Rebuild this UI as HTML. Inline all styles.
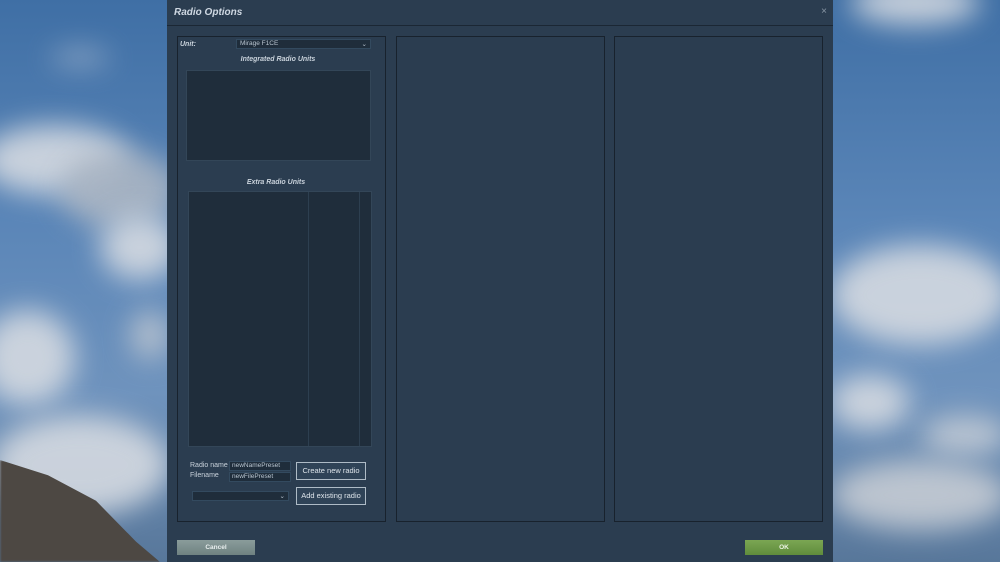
<!DOCTYPE html>
<html><head><style>
*{margin:0;padding:0;box-sizing:border-box}
body{width:1000px;height:562px;overflow:hidden;position:relative;font-family:"Liberation Sans","DejaVu Sans",sans-serif;background:linear-gradient(#3f6fa5,#5b86b8 40%,#6f93bd 70%,#58779a);}
.c{position:absolute;border-radius:50%;background:#d5dae1;filter:blur(14px);opacity:.9}
.dlg{position:absolute;left:167px;top:0;width:666px;height:562px;background:#2b3d50}
.ab{position:absolute}
.title{left:7px;top:7px;color:#cfd8e2;font-style:italic;font-weight:bold;font-size:10px}
.hline{left:0;top:25px;width:666px;height:1px;background:#1b2734}
.pnl{border:1px solid #18222d;background:#2b3d50}
.lbl{color:#c9d2db;font-size:7px;font-style:italic;font-weight:bold}
.inp{background:#1f2d3b;border:1px solid #334a5f;color:#b8c4cf;font-size:6.5px;padding:1px 2px}
.btn{border:1px solid #aebbc6;color:#dde4ea;font-size:7.5px;text-align:center;background:#2f4357}
</style></head><body>
<div class="c" style="left:-20px;top:125px;width:150px;height:70px"></div>
<div class="c" style="left:60px;top:150px;width:120px;height:80px;background:#aab5c3"></div>
<div class="c" style="left:100px;top:215px;width:80px;height:65px"></div>
<div class="c" style="left:-20px;top:310px;width:95px;height:95px"></div>
<div class="c" style="left:50px;top:50px;width:60px;height:15px;background:#9fb3cc"></div>
<div class="c" style="left:-10px;top:415px;width:180px;height:100px"></div>
<div class="c" style="left:130px;top:310px;width:40px;height:50px;background:#b9c3cf"></div>
<div style="position:absolute;left:0;top:460px;width:160px;height:102px;background:#4d4843;clip-path:polygon(0 0,30% 15%,60% 40%,85% 80%,100% 100%,0 100%);filter:blur(1px)"></div>
<div class="c" style="left:850px;top:-20px;width:130px;height:45px"></div>
<div class="c" style="left:830px;top:245px;width:180px;height:100px"></div>
<div class="c" style="left:830px;top:375px;width:80px;height:55px"></div>
<div class="c" style="left:920px;top:415px;width:90px;height:40px;background:#c4ccd6"></div>
<div class="c" style="left:830px;top:460px;width:180px;height:70px;background:#c6ccd4"></div>
<div class="dlg">
<div class="ab title">Radio Options</div>
<div class="ab" style="right:6px;top:6px;color:#8a98a6;font-size:10px">×</div>
<div class="ab hline"></div>
<div class="ab pnl" style="left:10px;top:36px;width:209px;height:486px">
 <div class="ab lbl" style="left:2px;top:4px">Unit:</div>
 <div class="ab inp" style="left:58px;top:2px;width:135px;height:10px;font-size:6.5px;padding:0 3px">Mirage F1CE<span style="float:right">⌄</span></div>
 <div class="ab lbl" style="left:0;width:200px;text-align:center;top:19px">Integrated Radio Units</div>
 <div class="ab" style="left:8px;top:33px;width:185px;height:91px;background:#1f2d3b;border:1px solid #334658"></div>
 <div class="ab lbl" style="left:0;width:196px;text-align:center;top:142px">Extra Radio Units</div>
 <div class="ab" style="left:10px;top:154px;width:184px;height:256px;background:#1f2d3b;border:1px solid #334658">
  <div class="ab" style="left:119px;top:0;width:1px;height:254px;background:#2d3f50"></div>
  <div class="ab" style="left:170px;top:0;width:1px;height:254px;background:#2d3f50"></div>
 </div>
 <div class="ab" style="left:12px;top:425px;color:#c9d2db;font-size:7px">Radio name</div>
 <div class="ab" style="left:12px;top:435px;color:#c9d2db;font-size:7px">Filename</div>
 <div class="ab inp" style="left:51px;top:424px;width:62px;height:10px;padding:0 2px">newNamePreset</div>
 <div class="ab inp" style="left:51px;top:435px;width:62px;height:10px;padding:0 2px">newFilePreset</div>
 <div class="ab btn" style="left:118px;top:425px;width:70px;height:18px;line-height:16px">Create new radio</div>
 <div class="ab inp" style="left:14px;top:454px;width:97px;height:10px;padding:0 3px;text-align:right">⌄</div>
 <div class="ab btn" style="left:118px;top:450px;width:70px;height:18px;line-height:16px">Add existing radio</div>
</div>
<div class="ab pnl" style="left:229px;top:36px;width:209px;height:486px"></div>
<div class="ab pnl" style="left:447px;top:36px;width:209px;height:486px"></div>
<div class="ab" style="left:10px;top:540px;width:78px;height:15px;background:linear-gradient(#8a9c9b,#6f8281);color:#e8eeee;font-size:6.5px;font-weight:bold;text-align:center;line-height:15px">Cancel</div>
<div class="ab" style="left:578px;top:540px;width:78px;height:15px;background:linear-gradient(#7ba653,#5f8c3c);color:#eef5e6;font-size:6.5px;font-weight:bold;text-align:center;line-height:15px">OK</div>
</div>
</body></html>
